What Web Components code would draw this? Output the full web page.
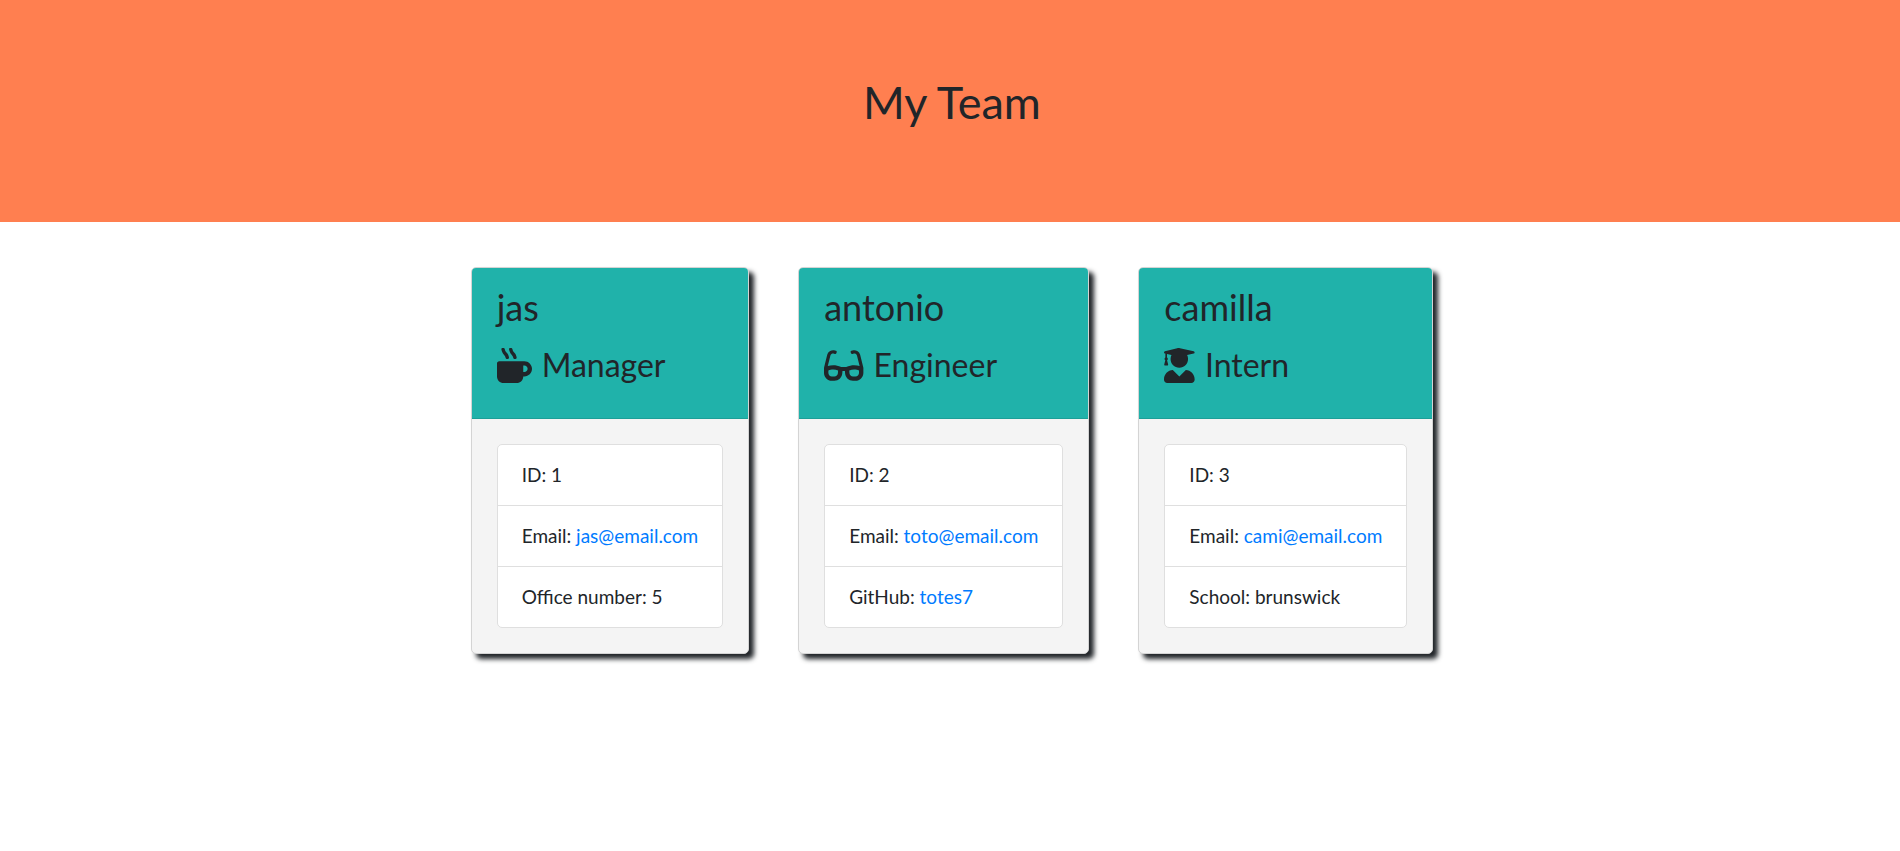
<!DOCTYPE html>
<html lang="en">
<head>
<meta charset="utf-8">
<meta name="viewport" content="width=device-width, initial-scale=1">
<title>My Team</title>
<style>
  body { margin: 0; background: #fff; color: #212529; font-family: "Gill Sans", "Gill Sans MT", Lato, sans-serif; font-size: 19px; line-height: 30px; }
</style>
</head>
<body>
<team-page>
  <team-banner>My Team</team-banner>
  <team-card name="jas" role-name="Manager" icon="mug">
    <team-field label="ID">1</team-field>
    <team-field label="Email" href="mailto:jas@email.com">jas@email.com</team-field>
    <team-field label="Office number">5</team-field>
  </team-card>
  <team-card name="antonio" role-name="Engineer" icon="glasses">
    <team-field label="ID">2</team-field>
    <team-field label="Email" href="mailto:toto@email.com">toto@email.com</team-field>
    <team-field label="GitHub" href="https://github.com/totes7">totes7</team-field>
  </team-card>
  <team-card name="camilla" role-name="Intern" icon="graduate">
    <team-field label="ID">3</team-field>
    <team-field label="Email" href="mailto:cami@email.com">cami@email.com</team-field>
    <team-field label="School">brunswick</team-field>
  </team-card>
</team-page>
<script>
const ICONS = {
  mug: [512, 'M127.1 146.5c1.3 7.7 8 13.5 16 13.5h16.5c9.8 0 17.6-8.5 16.3-18-3.8-28.2-16.4-54.2-36.6-74.7-14.4-14.7-23.6-33.3-26.4-53.5C111.8 5.9 105 0 96.8 0H80.4C70.6 0 63 8.5 64.1 18c3.9 31.9 18 61.3 40.6 84.4 12 12.2 19.7 27.5 22.4 44.1zm112 0c1.3 7.7 8 13.5 16 13.5h16.5c9.8 0 17.6-8.5 16.3-18-3.8-28.2-16.4-54.2-36.6-74.7-14.4-14.7-23.6-33.3-26.4-53.5C223.8 5.9 217 0 208.8 0h-16.4c-9.8 0-17.5 8.5-16.3 18 3.9 31.9 18 61.3 40.6 84.4 12 12.2 19.7 27.5 22.4 44.1zM400 192H32c-17.7 0-32 14.3-32 32v192c0 53 43 96 96 96h192c53 0 96-43 96-96h16c61.8 0 112-50.2 112-112s-50.2-112-112-112zm0 160h-16v-96h16c26.5 0 48 21.5 48 48s-21.5 48-48 48z'],
  glasses: [576, 'M574.1 280.37L528.75 98.66c-5.91-23.7-21.59-44.05-43-55.81-21.44-11.73-46.97-14.11-70.19-6.33l-15.25 5.08c-8.39 2.79-12.92 11.86-10.12 20.24l5.06 15.18c2.79 8.38 11.85 12.91 20.23 10.12l13.18-4.39c10.87-3.62 23-3.57 33.16 1.73 10.29 5.37 17.57 14.56 20.37 25.82l38.46 153.82c-22.19-6.81-49.79-12.46-81.2-12.46-34.77 0-73.98 7.02-114.85 26.74h-73.18c-40.87-19.74-80.08-26.75-114.86-26.75-31.42 0-59.02 5.65-81.21 12.46l38.46-153.83c2.79-11.25 10.09-20.45 20.38-25.81 10.16-5.3 22.28-5.35 33.15-1.73l13.17 4.39c8.38 2.79 17.44-1.74 20.23-10.12l5.06-15.18c2.8-8.38-1.73-17.45-10.12-20.24l-15.25-5.08c-23.22-7.78-48.75-5.41-70.19 6.33-21.41 11.77-37.09 32.11-43 55.81L1.9 280.37A64.218 64.218 0 0 0 0 295.86v70.25C0 429.01 51.58 480 115.2 480h37.12c60.28 0 110.37-45.94 114.88-105.37l2.93-38.63h35.75l2.93 38.63C313.31 434.06 363.4 480 423.68 480h37.12c63.62 0 115.2-50.99 115.2-113.88v-70.25c0-5.23-.64-10.43-1.9-15.5zm-370.72 89.42c-1.97 25.91-24.4 46.21-51.06 46.21H115.2C86.97 416 64 393.63 64 366.11v-37.54c18.12-6.49 43.42-12.92 72.58-12.92 23.86 0 47.26 4.33 69.93 12.92l-3.13 41.22zM512 366.12c0 27.51-22.97 49.88-51.2 49.88h-37.12c-26.67 0-49.1-20.3-51.06-46.21l-3.13-41.22c22.67-8.59 46.08-12.92 69.95-12.92 29.17 0 54.44 6.43 72.56 12.93v37.54z'],
  graduate: [448, 'M319.4 320.6L224 416l-95.4-95.4C57.1 323.7 0 382.2 0 454.4v9.6c0 26.5 21.5 48 48 48h352c26.5 0 48-21.5 48-48v-9.6c0-72.2-57.1-130.7-128.6-133.8zM13.6 79.8l6.4 1.5v58.4c-7 4.2-12 11.5-12 20.3 0 8.4 4.6 15.4 11.1 19.7L3.5 242c-1.7 6.9 2.1 14 7.6 14h41.8c5.5 0 9.3-7.1 7.6-14l-15.6-62.3C51.4 175.4 56 168.4 56 160c0-8.8-5-16.1-12-20.3V87.1l66 15.9c-8.6 17.2-14 36.4-14 57 0 70.7 57.3 128 128 128s128-57.3 128-128c0-20.6-5.3-39.8-14-57l96.3-23.2c18.2-4.4 18.2-27.1 0-31.5L233.2 2.3c-13-3.1-26.7-3.1-39.7 0L13.6 48.2c-18.1 4.4-18.1 27.2 0 31.6z']
};

class TeamPage extends HTMLElement {
  constructor() {
    super();
    this.attachShadow({ mode: 'open' }).innerHTML = `
      <style>
        :host { display: block; }
        main { display: flex; flex-wrap: wrap; justify-content: center; align-items: flex-start; gap: 49px; padding: 45px 20px 45px 24px; }
      </style>
      <header><slot name="banner"></slot></header>
      <main><slot></slot></main>`;
    this.querySelector('team-banner').slot = 'banner';
  }
}

class TeamBanner extends HTMLElement {
  constructor() {
    super();
    this.attachShadow({ mode: 'open' }).innerHTML = `
      <style>
        :host { display: block; background: #ff7f50; padding: 72px 20px 90px 24px; text-align: center; }
        h1 { margin: 0; font-size: 45px; line-height: 60px; font-weight: 400; }
      </style>
      <h1><slot></slot></h1>`;
  }
}

class TeamCard extends HTMLElement {
  constructor() {
    super();
    const [width, path] = ICONS[this.getAttribute('icon')];
    this.attachShadow({ mode: 'open' }).innerHTML = `
      <style>
        :host { display: block; border: 1px solid #d4d4d4; border-radius: 5px; background: #f4f4f4; box-shadow: 5px 5px 5px #212529; }
        header { background: #20b2aa; border-bottom: 1px solid #1c9f98; border-radius: 4px 4px 0 0; padding: 15px 25px 28px; }
        h2, h3 { margin: 0; font-weight: 400; }
        h2 { font-size: 36px; line-height: 48px; margin-bottom: 9px; }
        h3 { display: flex; align-items: center; gap: 10px; font-size: 32px; line-height: 50px; }
        svg { height: 35px; fill: currentColor; }
        ul { list-style: none; margin: 25px; padding: 0; background: #fff; border: 1px solid #dfdfdf; border-radius: 5px; }
      </style>
      <header>
        <h2></h2>
        <h3><svg viewBox="0 0 ${width} 512" aria-hidden="true"><path d="${path}"/></svg><span></span></h3>
      </header>
      <ul><slot></slot></ul>`;
    this.shadowRoot.querySelector('h2').textContent = this.getAttribute('name');
    this.shadowRoot.querySelector('span').textContent = this.getAttribute('role-name');
  }
}

class TeamField extends HTMLElement {
  constructor() {
    super();
    const href = this.getAttribute('href');
    this.attachShadow({ mode: 'open' }).innerHTML = `
      <style>
        :host { display: block; padding: 15px 24px; border-bottom: 1px solid #dfdfdf; }
        :host(:last-child) { border-bottom: 0; }
        a { color: #007bff; text-decoration: none; }
        a:hover { text-decoration: underline; }
      </style>
      ${this.getAttribute('label')}: ${href ? `<a href="${href}"><slot></slot></a>` : '<slot></slot>'}`;
    this.setAttribute('role', 'listitem');
  }
}

customElements.define('team-page', TeamPage);
customElements.define('team-banner', TeamBanner);
customElements.define('team-card', TeamCard);
customElements.define('team-field', TeamField);
</script>
</body>
</html>
